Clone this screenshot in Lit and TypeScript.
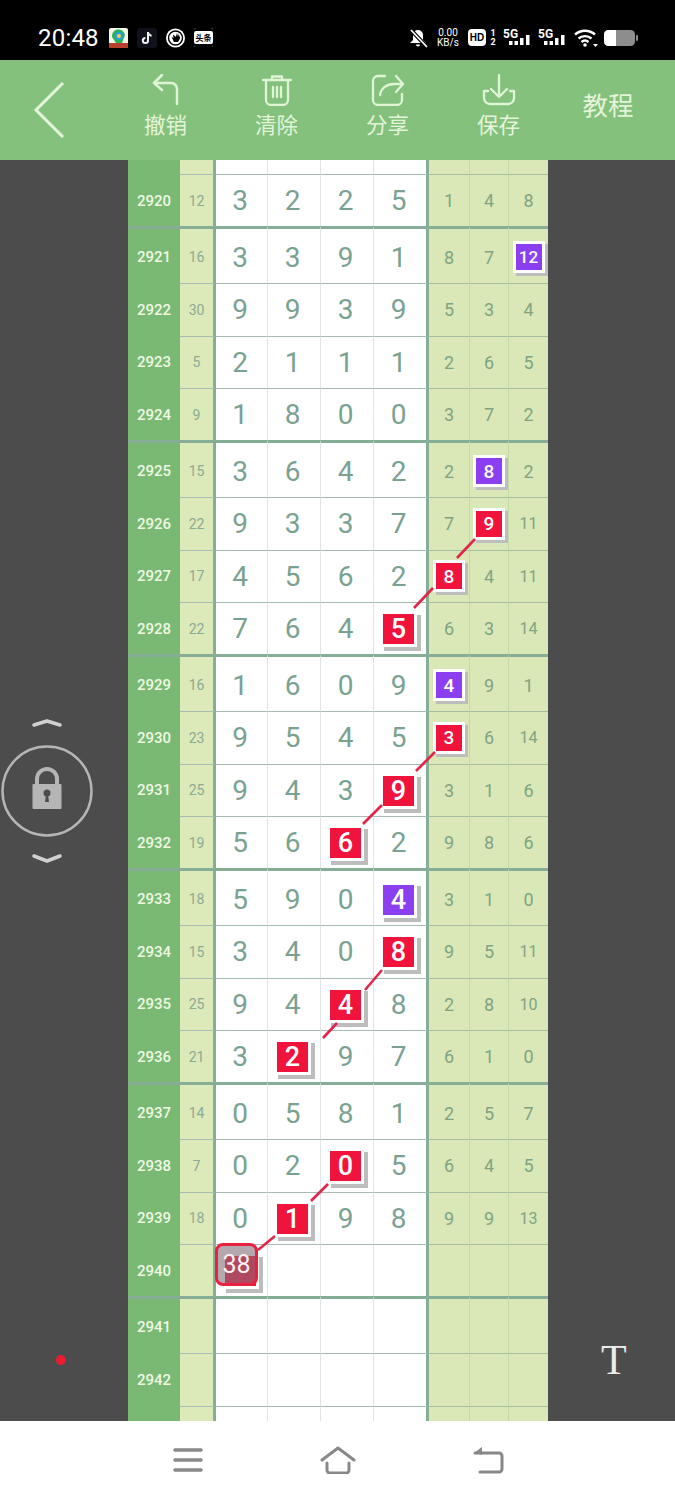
import { LitElement, html, css, svg } from "lit";
import { customElement } from "lit/decorators.js";
import { classMap } from "lit/directives/class-map.js";

type Row = [string, string, string[]];
// value suffix: r = red badge, p = purple badge, g = translucent first-draw marker
const rows: Row[] = [
  ["2920", "12", ["3", "2", "2", "5", "1", "4", "8"]],
  ["2921", "16", ["3", "3", "9", "1", "8", "7", "12p"]],
  ["2922", "30", ["9", "9", "3", "9", "5", "3", "4"]],
  ["2923", "5", ["2", "1", "1", "1", "2", "6", "5"]],
  ["2924", "9", ["1", "8", "0", "0", "3", "7", "2"]],
  ["2925", "15", ["3", "6", "4", "2", "2", "8p", "2"]],
  ["2926", "22", ["9", "3", "3", "7", "7", "9r", "11"]],
  ["2927", "17", ["4", "5", "6", "2", "8r", "4", "11"]],
  ["2928", "22", ["7", "6", "4", "5r", "6", "3", "14"]],
  ["2929", "16", ["1", "6", "0", "9", "4p", "9", "1"]],
  ["2930", "23", ["9", "5", "4", "5", "3r", "6", "14"]],
  ["2931", "25", ["9", "4", "3", "9r", "3", "1", "6"]],
  ["2932", "19", ["5", "6", "6r", "2", "9", "8", "6"]],
  ["2933", "18", ["5", "9", "0", "4p", "3", "1", "0"]],
  ["2934", "15", ["3", "4", "0", "8r", "9", "5", "11"]],
  ["2935", "25", ["9", "4", "4r", "8", "2", "8", "10"]],
  ["2936", "21", ["3", "2r", "9", "7", "6", "1", "0"]],
  ["2937", "14", ["0", "5", "8", "1", "2", "5", "7"]],
  ["2938", "7", ["0", "2", "0r", "5", "6", "4", "5"]],
  ["2939", "18", ["0", "1r", "9", "8", "9", "9", "13"]],
  ["2940", "", ["38g", "", "", "", "", "", ""]],
  ["2941", "", ["", "", "", "", "", "", ""]],
  ["2942", "", ["", "", "", "", "", "", ""]],
  ["", "", ["", "", "", "", "", "", ""]],
];

const links = [
  [475, 539, 457, 558], [433, 588, 414, 608],
  [435, 752, 416, 771], [382, 805, 363, 824],
  [382, 970, 365, 990], [337, 1023, 323, 1038],
  [328, 1184, 311, 1201], [275, 1236, 258, 1250],
];

@customElement("app-root")
export class AppRoot extends LitElement {
  static styles = css`
    :host { display: block; width: 675px; height: 1500px; overflow: hidden; font-family: Roboto, "Noto Sans CJK SC", sans-serif; }
    .page { display: flex; flex-direction: column; height: 1500px; }

    .status { height: 60px; background: #000; display: flex; align-items: center; color: #fff; padding: 15px 0 0 38px; box-sizing: border-box; }
    .time { font-size: 24px; width: 71px; letter-spacing: 0.2px; }
    .apps { display: flex; gap: 9px; align-items: center; }
    .apps svg { display: block; }
    .toutiao { width: 19px; height: 19px; background: #fff; border-radius: 2px; color: #000; font: 700 8px/19px "Noto Sans CJK SC", sans-serif; text-align: center; box-shadow: inset 0 3px 0 #000, inset 0 -3px 0 #000; }
    .sys { margin-left: auto; display: flex; align-items: center; padding-right: 37px; }
    .speed { font-size: 10px; line-height: 10px; text-align: center; width: 26px; margin: 0 7px; }
    .hd { width: 18px; height: 17px; border-radius: 4px; background: #fff; color: #000; font: 800 10px/17px "Liberation Sans", sans-serif; text-align: center; }
    .sim { font-size: 9px; font-weight: 700; line-height: 9px; width: 8px; text-align: center; margin: 0 6px 0 3px; }
    .net { width: 28px; margin-right: 7px; }
    .wifi { margin: 0 6px 0 1px; }

    .top { height: 100px; background: #83c17c; display: flex; color: #e4f4da; flex: none; }
    .back { width: 110px; display: flex; align-items: center; padding-left: 32px; box-sizing: border-box; }
    .act { width: 111px; display: flex; flex-direction: column; align-items: center; padding-top: 14px; box-sizing: border-box; font-size: 21.5px; line-height: 28px; }
    .act svg { display: block; margin-bottom: 6px; }
    .teach { width: 108px; display: flex; align-items: center; justify-content: center; font-size: 25.5px; padding-bottom: 14px; box-sizing: border-box; }

    .main { flex: 1; min-height: 0; display: flex; background: #4c4c4c; overflow: hidden; }
    .left { width: 128px; flex: none; display: flex; flex-direction: column; align-items: flex-start; padding-top: 555px; box-sizing: border-box; }
    .lockbox { display: block; }
    .dot { width: 10px; height: 10px; border-radius: 50%; background: #ec1c2e; margin: 484px 0 0 56px; }
    .right { flex: 1; display: flex; flex-direction: column; align-items: flex-start; padding: 1173px 0 0 53px; box-sizing: border-box; color: #ececec; font: 42px/54px "Liberation Serif", serif; }

    .board { position: relative; width: 420px; flex: none; background: #fff; overflow: hidden; }
    .links { position: absolute; left: 0; top: 0; pointer-events: none; }
    .row { display: grid; grid-template-columns: 52px 36px 51px 53px 53px 56px 40px 39px 40px; height: 52.33px; }
    .row.head { height: 57px; }
    .row.stub { height: 14px; }
    .c { box-sizing: border-box; display: flex; align-items: center; justify-content: center; position: relative; border-top: 1px solid #a9bcb4; min-width: 0; }
    .head .c { border-top: 3.5px solid #86ae97; padding-top: 2px; }
    .stub .c { border-top: 0; }
    .id { background: #79b974; color: #eef8e2; font-size: 15px; font-weight: 500; border-top-color: #79b974; }
    .sum { background: #dce9b9; color: #8aab95; font-size: 14px; border-right: 3px solid #86ae97; }
    .d { color: #7aa292; font-size: 28px; font-weight: 400; border-left: 1px solid #dfe5e4; padding-right: 3px; }
    .d.first { border-left: 0; }
    .d.last { border-right: 3px solid #86ae97; }
    .x { background: #d9e8b6; color: #7fa483; font-size: 18px; font-weight: 400; border-left: 1px solid #c5d9a6; border-top-color: #a6bd9f; }
    .x.first { border-left: 0; }
    .x.small { font-size: 16px; }

    .b { box-sizing: content-box; display: flex; align-items: center; justify-content: center; color: #fff; border: 3px solid #fff; box-shadow: 3px 3px 0 #bdbdbd; font-weight: 500; }
    .d .b { width: 31px; height: 30px; font-size: 27px; margin: 1px 0 0 0; box-shadow: 4px 4px 0 #bdbdbd; }
    .x .b { width: 26px; height: 26px; font-size: 19px; }
    .x .b.two { font-size: 17px; }
    .r { background: #f0133c; }
    .p { background: #8b3ff0; }
    .ghost { position: absolute; left: -1px; top: -2px; width: 43px; height: 43px; box-sizing: border-box; border: 3px solid #e8213f; border-radius: 8px; background: rgba(130, 110, 120, 0.6); color: #fbf0f0; font-size: 25px; font-weight: 400; display: flex; align-items: center; justify-content: center; }

    .nav { height: 79px; flex: none; background: #fff; display: flex; justify-content: center; align-items: center; padding-bottom: 2px; box-sizing: border-box; }
    .nav div { width: 150px; display: flex; justify-content: center; }
    .nav svg { display: block; }
  `;

  private cell(v: string, i: number) {
    const kind = v.slice(-1);
    const marked = kind === "r" || kind === "p" || kind === "g";
    const val = marked ? v.slice(0, -1) : v;
    const digit = i < 4;
    const cls = {
      c: true,
      d: digit,
      x: !digit,
      first: i === 0 || i === 4,
      last: i === 3,
      small: !digit && val.length > 1,
    };
    if (kind === "g")
      return html`<div class=${classMap(cls)}><span class="b r"></span><span class="ghost">${val}</span></div>`;
    return html`<div class=${classMap(cls)}>
      ${marked
        ? html`<span class=${classMap({ b: true, r: kind === "r", p: kind === "p", two: val.length > 1 })}>${val}</span>`
        : val}
    </div>`;
  }

  private row(r: Row | null, head: boolean) {
    const [id, sum, vals] = r ?? ["", "", ["", "", "", "", "", "", ""]];
    return html`<div class=${classMap({ row: true, head, stub: !r })}>
      <div class="c id">${id}</div>
      <div class="c sum">${sum}</div>
      ${vals.map((v, i) => this.cell(v, i))}
    </div>`;
  }

  private statusBar() {
    return html`<div class="status">
      <div class="time">20:48</div>
      <div class="apps">
        <svg width="19" height="20" viewBox="0 0 19 20">
          <rect width="19" height="20" rx="2" fill="#f4f6e8"/>
          <path d="M3 9a6.5 6.5 0 0 1 13-2l-3 8H7z" fill="#27b35a"/>
          <circle cx="10" cy="8" r="4" fill="#2a9fe0"/>
          <circle cx="10" cy="8" r="2" fill="#f6d23a"/>
          <rect y="15" width="19" height="5" fill="#b8402e"/>
        </svg>
        <svg width="20" height="20" viewBox="0 0 20 20">
          <rect width="20" height="20" rx="3" fill="#11111c"/>
          <path d="M11 4v8.5a2.6 2.6 0 1 1-2.6-2.6M11 4.5c.5 2 1.8 3 3.6 3.2" fill="none" stroke="#f2f2f6" stroke-width="2"/>
        </svg>
        <svg width="19" height="20" viewBox="0 0 19 20">
          <circle cx="9.5" cy="10" r="9.5" fill="#fff"/>
          <circle cx="9.5" cy="10" r="7" fill="none" stroke="#000" stroke-width="1.4"/>
          <path d="M5.5 9l2.5 5h4l2-3.500V7l-1 2.500V5.500l-1 3V5l-1 3.500-1-3.500v4L7 6.500 7.500 10z" fill="#000"/>
        </svg>
        <div class="toutiao">头条</div>
      </div>
      <div class="sys">
        <svg width="19" height="20" viewBox="0 0 19 20">
          <path d="M9 2a5 5 0 0 1 5 5v5l3 3H1l3-3V7a5 5 0 0 1 5-5z M7 16.500h4a2 2 0 0 1-4 0z" fill="#fff"/>
          <path d="M1 1l17 18" stroke="#000" stroke-width="4"/>
          <path d="M2 2l16 17" stroke="#fff" stroke-width="1.800"/>
        </svg>
        <div class="speed">0.00<br />KB/s</div>
        <div class="hd">HD</div>
        <div class="sim">1<br />2</div>
        <svg class="net" viewBox="0 0 28 20" height="20">
          <text x="0" y="10" font-size="12" font-weight="700" fill="#fff" font-family="Roboto">5G</text>
          <rect x="6" y="13" width="3.500" height="4" fill="#fff"/><rect x="11.500" y="13" width="3.500" height="4" fill="#fff"/>
          <rect x="17" y="10" width="3.500" height="7" fill="#fff"/><rect x="23" y="7" width="3.500" height="10" fill="#fff"/>
        </svg>
        <svg class="net" viewBox="0 0 28 20" height="20">
          <text x="0" y="10" font-size="12" font-weight="700" fill="#fff" font-family="Roboto">5G</text>
          <rect x="6" y="13" width="3.500" height="4" fill="#fff"/><rect x="11.500" y="13" width="3.500" height="4" fill="#fff"/>
          <rect x="17" y="10" width="3.500" height="7" fill="#fff"/><rect x="23" y="7" width="3.500" height="10" fill="#fff"/>
        </svg>
        <svg class="wifi" width="24" height="20" viewBox="0 0 24 20">
          <path d="M1 6.500a15 15 0 0 1 20 0M4.500 10.500a10 10 0 0 1 13 0M7.500 14a5.500 5.500 0 0 1 7 0" fill="none" stroke="#fff" stroke-width="2.400"/>
          <circle cx="11" cy="17" r="1.800" fill="#fff"/><path d="M19 16h5l-2.500 3z" fill="#fff"/>
        </svg>
        <svg width="34" height="18" viewBox="0 0 34 18">
          <rect x="0" y="1" width="31" height="16" rx="4.500" fill="#8d8d8d"/>
          <path d="M4.500 1H12v16H4.500A4.500 4.500 0 0 1 0 12.500v-7A4.500 4.500 0 0 1 4.500 1z" fill="#fff"/>
          <rect x="32" y="6" width="2" height="6" rx="1" fill="#8d8d8d"/>
        </svg>
      </div>
    </div>`;
  }

  private topBar() {
    const ic = "none";
    return html`<div class="top">
      <div class="back">
        <svg width="36" height="60" viewBox="0 0 36 60">
          <path d="M31 3L4 30l27 27" fill=${ic} stroke="#e6f6dc" stroke-width="3"/>
        </svg>
      </div>
      <div class="act">
        <svg width="30" height="32" viewBox="0 0 30 32">
          <path d="M11 1L3 9l8 7M3 9h17a6 6 0 0 1 6 6v15" fill=${ic} stroke="#e0f4d6" stroke-width="2.500" stroke-linecap="round" stroke-linejoin="round"/>
        </svg>
        撤销
      </div>
      <div class="act">
        <svg width="30" height="32" viewBox="0 0 30 32">
          <path d="M1 6h28M10 6V2.500h10V6M4 6v20a5 5 0 0 0 5 5h12a5 5 0 0 0 5-5V6M11 13v10M15 13v10M19 13v10" fill=${ic} stroke="#e0f4d6" stroke-width="2.300" stroke-linecap="round" stroke-linejoin="round"/>
        </svg>
        清除
      </div>
      <div class="act">
        <svg width="34" height="32" viewBox="0 0 34 32">
          <path d="M14 2H7a5 5 0 0 0-5 5v19a5 5 0 0 0 5 5h19a5 5 0 0 0 5-5v-6M9 21c1-7 7-11 14-11h9M25 2l7 8-7 8" fill=${ic} stroke="#e0f4d6" stroke-width="2.300" stroke-linecap="round" stroke-linejoin="round"/>
        </svg>
        分享
      </div>
      <div class="act">
        <svg width="34" height="32" viewBox="0 0 34 32">
          <path d="M17 1v21M9 15l8 8 8-8M2 17v7a6 6 0 0 0 6 6h18a6 6 0 0 0 6-6v-7h-4M2 17h4" fill=${ic} stroke="#e0f4d6" stroke-width="2.300" stroke-linecap="round" stroke-linejoin="round"/>
        </svg>
        保存
      </div>
      <div class="teach">教程</div>
    </div>`;
  }

  private lock() {
    return html`<svg class="lockbox" width="94" height="156" viewBox="0 0 94 156">
      <path d="M34 10l13-4 13 4" fill="none" stroke="#d0d0d0" stroke-width="3.500" stroke-linecap="round" stroke-linejoin="round"/>
      <circle cx="47" cy="76" r="44.500" fill="none" stroke="#b5b5b5" stroke-width="2.500"/>
      <path d="M37 72V64a10 10 0 0 1 20 0v8" fill="none" stroke="#b5b5b5" stroke-width="4"/>
      <rect x="32.500" y="69" width="29" height="25" rx="1" fill="#b5b5b5"/>
      <circle cx="47" cy="78" r="3.500" fill="#4c4c4c"/>
      <path d="M46 79h2l1 8h-4z" fill="#4c4c4c"/>
      <path d="M34 141l13 5 13-5" fill="none" stroke="#d0d0d0" stroke-width="3.500" stroke-linecap="round" stroke-linejoin="round"/>
    </svg>`;
  }

  render() {
    return html`<div class="page">
      ${this.statusBar()}
      ${this.topBar()}
      <div class="main">
        <div class="left">
          ${this.lock()}
          <div class="dot"></div>
        </div>
        <div class="board">
          ${this.row(null, false)}
          ${rows.map((r, i) => this.row(r, i > 0 && (i - 1) % 4 === 0))}
          <svg class="links" width="420" height="1261" viewBox="128 160 420 1261">
            ${links.map(([a, b, c, d]) => svg`<line x1=${a} y1=${b} x2=${c} y2=${d} stroke="#e0264a" stroke-width="2.600"/>`)}
          </svg>
        </div>
        <div class="right">T</div>
      </div>
      <div class="nav">
        <div><svg width="30" height="26" viewBox="0 0 30 26"><path d="M2 3h26M2 13h26M2 23h26" stroke="#888" stroke-width="3.500" stroke-linecap="round"/></svg></div>
        <div><svg width="36" height="28" viewBox="0 0 36 28"><path d="M2 14L18 2l16 12M7 17v7a3 3 0 0 0 3 3h16a3 3 0 0 0 3-3v-7" fill="none" stroke="#888" stroke-width="3" stroke-linecap="round" stroke-linejoin="round"/></svg></div>
        <div><svg width="32" height="28" viewBox="0 0 32 28"><path d="M3 7h24a3 3 0 0 1 3 3v13a3 3 0 0 1-3 3H8" fill="none" stroke="#888" stroke-width="3" stroke-linecap="round"/><path d="M10 1L2 7l8 2z" fill="#888"/></svg></div>
      </div>
    </div>`;
  }
}
